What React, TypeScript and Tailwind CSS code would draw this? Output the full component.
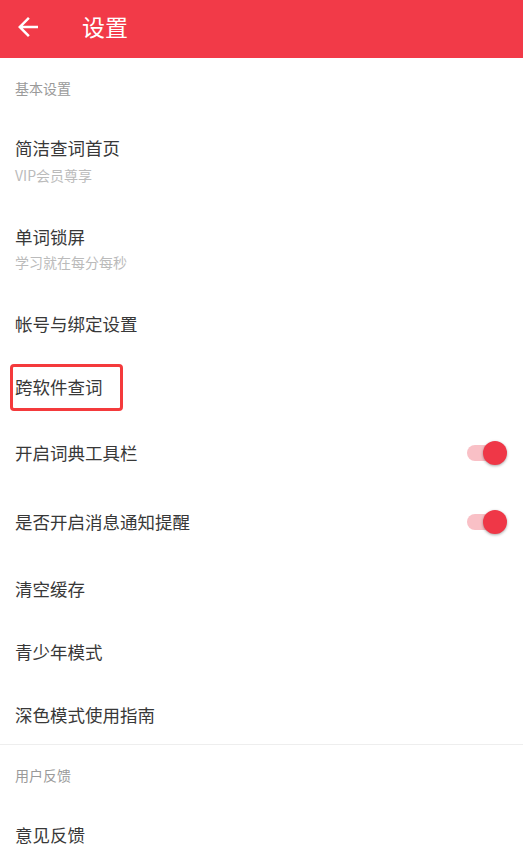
import React from "react";

const font = { fontFamily: '"Noto Sans CJK SC", "Noto Sans", sans-serif' };

function Toggle() {
  return (
    <div className="relative w-[40px] h-[24px] mr-[16px]">
      <div className="absolute left-0 top-[4px] w-[36px] h-[16px] rounded-full bg-[#f9c0c6]" />
      <div className="absolute right-0 top-0 w-[24px] h-[24px] rounded-full bg-[#ef3747] shadow-[0_1px_3px_rgba(0,0,0,0.35)]" />
    </div>
  );
}

function Row({ h, text, toggle }: { h: string; text: string; toggle?: boolean }) {
  return (
    <div className={`flex items-center justify-between pl-[15px] ${h}`}>
      <span className="text-[17.5px] leading-none text-[#383838]">{text}</span>
      {toggle && <Toggle />}
    </div>
  );
}

export default function App() {
  return (
    <div className="w-[523px] h-[863px] bg-white overflow-hidden" style={font}>
      <div className="h-[58px] bg-[#f23a48] flex items-center relative">
        <svg className="ml-[13px] mt-[-4px]" width="30" height="30" viewBox="0 0 24 24" fill="white">
          <path d="M20 11H7.83l5.59-5.59L12 4l-8 8 8 8 1.41-1.41L7.83 13H20v-2z" />
        </svg>
        <span className="ml-[39px] mt-[-5px] text-[23px] leading-none text-white">设置</span>
      </div>

      <div className="h-[60px] flex items-center pl-[15px]">
        <span className="text-[14px] leading-none text-[#9a9a9a]">基本设置</span>
      </div>

      <div className="h-[89px] pl-[15px] flex flex-col">
        <span className="mt-[21px] text-[17.5px] leading-none text-[#383838]">简洁查词首页</span>
        <span className="mt-[11px] text-[14px] leading-none text-[#bbb]">VIP会员尊享</span>
      </div>
      <div className="h-[89px] pl-[15px] flex flex-col">
        <span className="mt-[21px] text-[17.5px] leading-none text-[#383838]">单词锁屏</span>
        <span className="mt-[9px] text-[14px] leading-none text-[#bbb]">学习就在每分每秒</span>
      </div>

      <Row h="h-[56px]" text="帐号与绑定设置" />
      <div className="h-[70px] flex items-center pl-[10px]">
        <div className="w-[113px] h-[47px] border-[3px] border-[#f43a3c] rounded-[4px] flex items-center pl-[2px]">
          <span className="text-[17.5px] leading-none text-[#383838]">跨软件查词</span>
        </div>
      </div>
      <Row h="h-[62px]" text="开启词典工具栏" toggle />
      <Row h="h-[76px]" text="是否开启消息通知提醒" toggle />
      <Row h="h-[58px]" text="清空缓存" />
      <Row h="h-[68px]" text="青少年模式" />
      <Row h="h-[58px]" text="深色模式使用指南" />
      <div className="h-px bg-[#eeeeee]" />

      <div className="h-[60px] flex items-center pl-[15px]">
        <span className="text-[14px] leading-none text-[#9a9a9a]">用户反馈</span>
      </div>
      <Row h="h-[60px]" text="意见反馈" />
    </div>
  );
}
